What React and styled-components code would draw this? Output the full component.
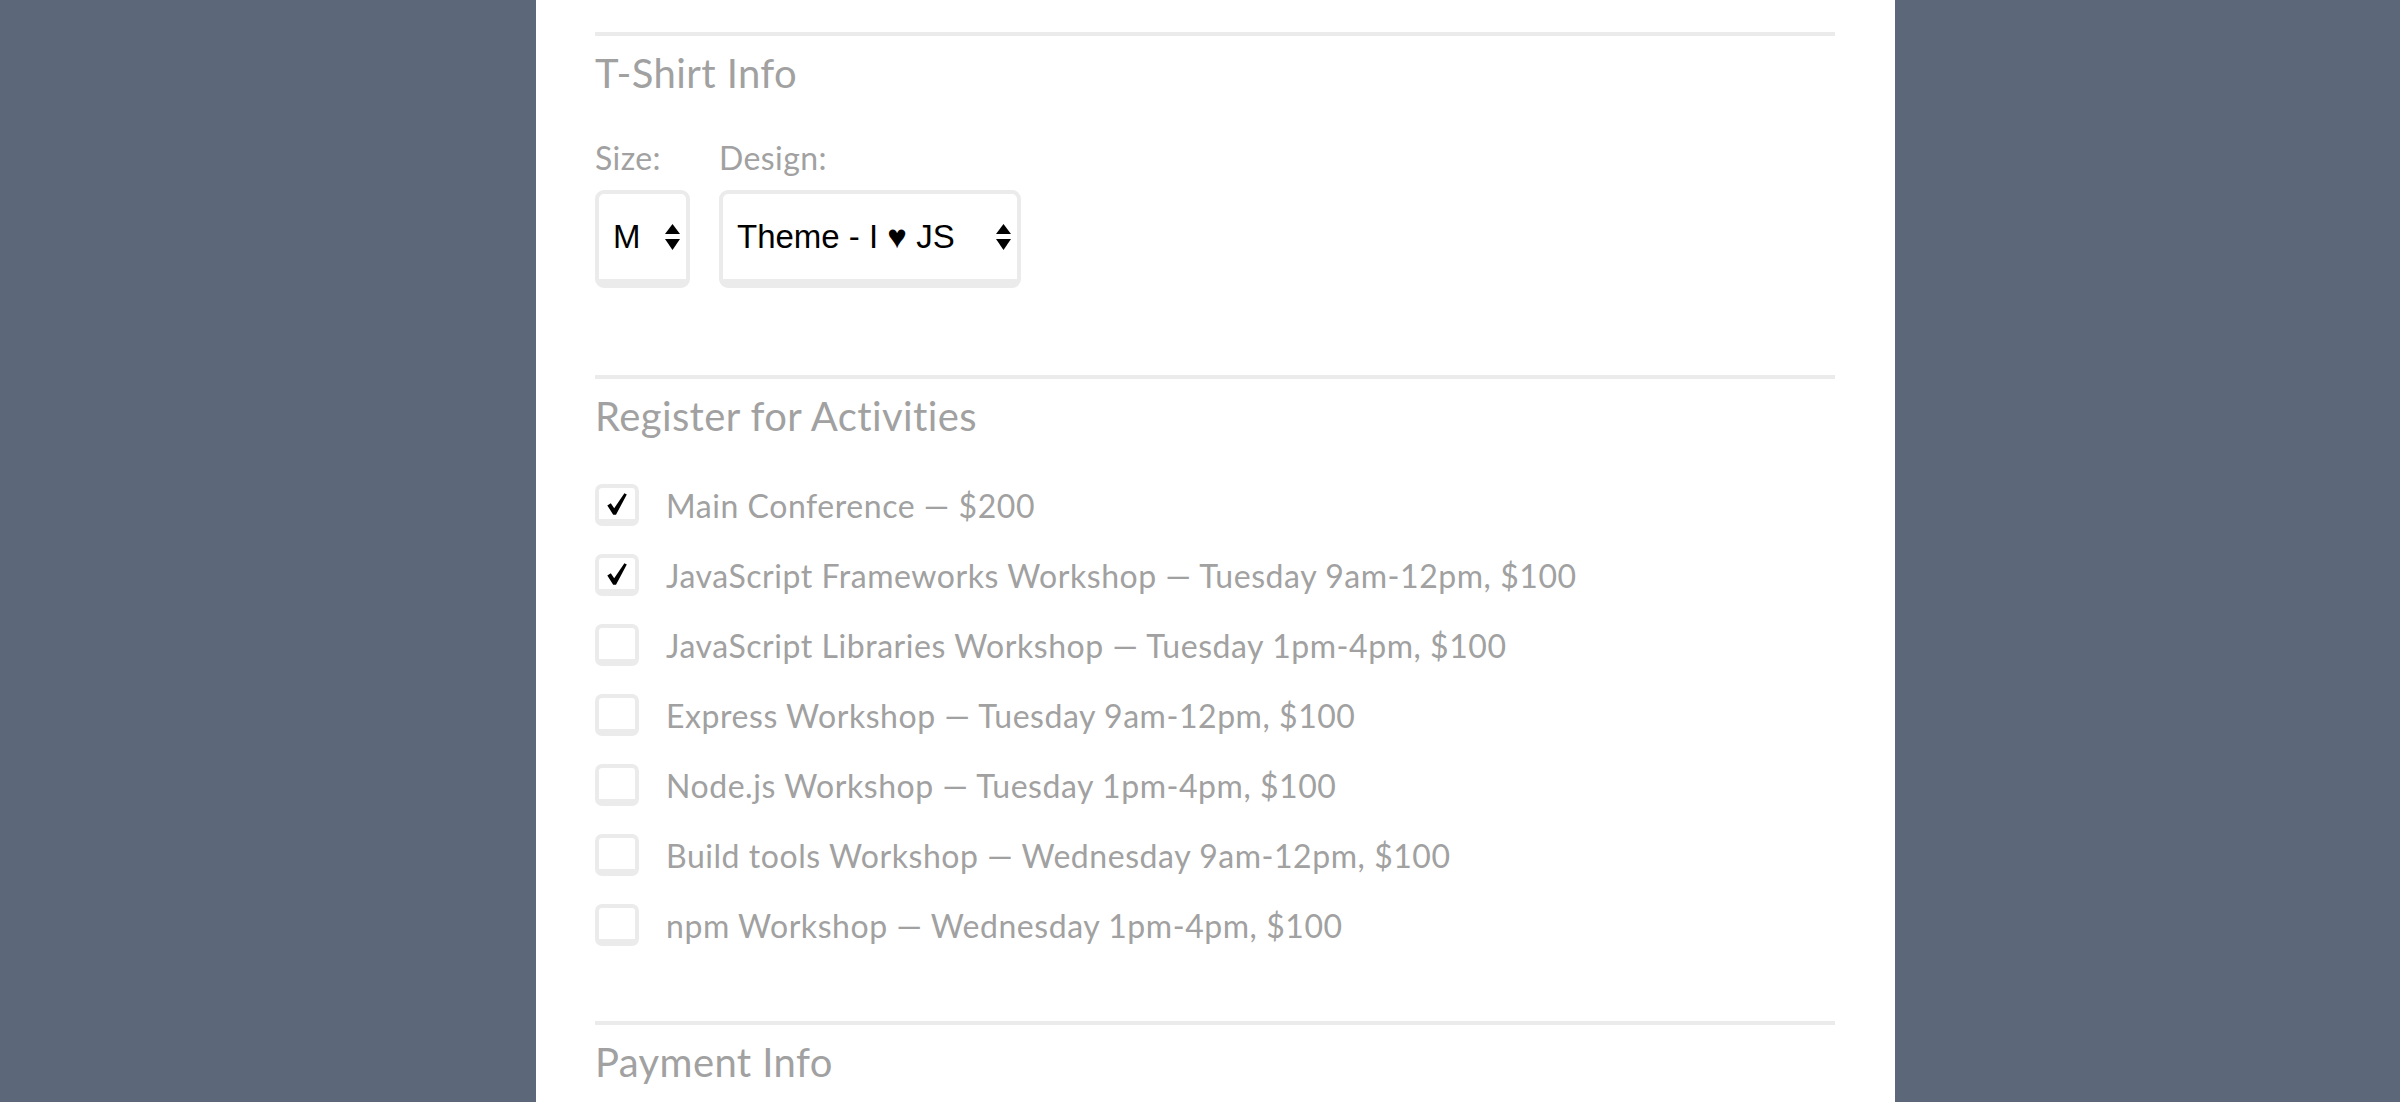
import React from "react";
import styled, { createGlobalStyle } from "styled-components";

const GlobalStyle = createGlobalStyle`
  html, body { margin: 0; padding: 0; background: #5c6779; }
  body { font-family: Lato, "Noto Sans", sans-serif; }
`;

const Page = styled.div`
  height: 1102px;
  overflow: hidden;
`;

const Panel = styled.form`
  margin-left: 536px;
  width: 1359px;
  min-height: 1102px;
  box-sizing: border-box;
  background: #fff;
  padding: 32px 60px 0 59px;
`;

const Section = styled.fieldset`
  border: 0;
  border-top: 4px solid #ebebeb;
  margin: 0;
  min-width: 0;
  padding: 15px 0 ${(p) => p.$pb || 0}px;
`;

const Heading = styled.h2`
  margin: 0;
  font-size: 40px;
  font-weight: 400;
  letter-spacing: 0.4px;
  line-height: 44px;
  color: #a1a1a1;
`;

const FieldRow = styled.div`
  display: flex;
  gap: 29px;
  margin-top: 45px;
`;

const Field = styled.div`
  display: flex;
  flex-direction: column;
  gap: 14px;
`;

const Label = styled.label`
  font-size: 32px;
  letter-spacing: 0.4px;
  line-height: 36px;
  color: #a1a1a1;
`;

const SelectBox = styled.div`
  display: flex;
  align-items: center;
  width: ${(p) => p.$w}px;
  height: 98px;
  box-sizing: border-box;
  border: 4px solid #ebebeb;
  border-bottom-width: 9px;
  border-radius: 9px;
  padding: 0 6px 0 14px;
  background: #fff;
`;

const Select = styled.select`
  appearance: none;
  -webkit-appearance: none;
  border: 0;
  outline: 0;
  background: transparent;
  font-family: "Liberation Sans", Arial, "DejaVu Sans", sans-serif;
  font-size: 33px;
  color: #000;
  flex: 1;
  min-width: 0;
  padding: 0;
  margin: 0;
`;

const List = styled.div`
  display: flex;
  flex-direction: column;
  margin-top: 32px;
`;

const Row = styled.label`
  display: flex;
  align-items: center;
  gap: 27px;
  height: 70px;
  font-size: 32px;
  letter-spacing: 0.55px;
  color: #a1a1a1;
`;

const HiddenInput = styled.input`
  position: absolute;
  opacity: 0;
  width: 0;
  height: 0;
  margin: 0;
`;

const Box = styled.span`
  flex: none;
  width: 44px;
  height: 42px;
  box-sizing: border-box;
  border: 4px solid #ebebeb;
  border-bottom-width: 7px;
  border-radius: 7px;
  background: #fff;
  display: flex;
  align-items: center;
  justify-content: center;
`;

const Arrows = () => (
  <svg width="15" height="26" viewBox="0 0 15 26" style={{ flex: "none" }}>
    <path d="M0 10 L7.5 0 L15 10 Z" fill="#000" />
    <path d="M0 15 L15 15 L7.5 26 Z" fill="#000" />
  </svg>
);

const Check = () => (
  <svg width="20" height="22" viewBox="0 0 20 22">
    <path
      d="M0.3 12.4 L3.8 10.2 L7.2 15.2 L17.4 0.3 L19.8 1.5 L9 21.7 L6.2 21.7 Z"
      fill="#000"
    />
  </svg>
);

const activities = [
  { text: "Main Conference \u2014 $200", checked: true },
  { text: "JavaScript Frameworks Workshop \u2014 Tuesday 9am-12pm, $100", checked: true },
  { text: "JavaScript Libraries Workshop \u2014 Tuesday 1pm-4pm, $100" },
  { text: "Express Workshop \u2014 Tuesday 9am-12pm, $100" },
  { text: "Node.js Workshop \u2014 Tuesday 1pm-4pm, $100" },
  { text: "Build tools Workshop \u2014 Wednesday 9am-12pm, $100" },
  { text: "npm Workshop \u2014 Wednesday 1pm-4pm, $100" },
];

export default function App() {
  return (
    <Page>
      <GlobalStyle />
      <Panel onSubmit={(e) => e.preventDefault()}>
        <Section $pb={87}>
          <Heading>T-Shirt Info</Heading>
          <FieldRow>
            <Field>
              <Label htmlFor="size">Size:</Label>
              <SelectBox $w={95}>
                <Select id="size" defaultValue="M">
                  <option value="S">S</option>
                  <option value="M">M</option>
                  <option value="L">L</option>
                  <option value="XL">XL</option>
                </Select>
                <Arrows />
              </SelectBox>
            </Field>
            <Field>
              <Label htmlFor="design">Design:</Label>
              <SelectBox $w={302}>
                <Select id="design" defaultValue="heart js">
                  <option value="js puns">Theme - JS Puns</option>
                  <option value="heart js">Theme - I {"\u2665"} JS</option>
                </Select>
                <Arrows />
              </SelectBox>
            </Field>
          </FieldRow>
        </Section>
        <Section $pb={61}>
          <Heading>Register for Activities</Heading>
          <List>
            {activities.map((a) => (
              <Row key={a.text}>
                <HiddenInput type="checkbox" defaultChecked={!!a.checked} />
                <Box>{a.checked && <Check />}</Box>
                {a.text}
              </Row>
            ))}
          </List>
        </Section>
        <Section>
          <Heading>Payment Info</Heading>
        </Section>
      </Panel>
    </Page>
  );
}
